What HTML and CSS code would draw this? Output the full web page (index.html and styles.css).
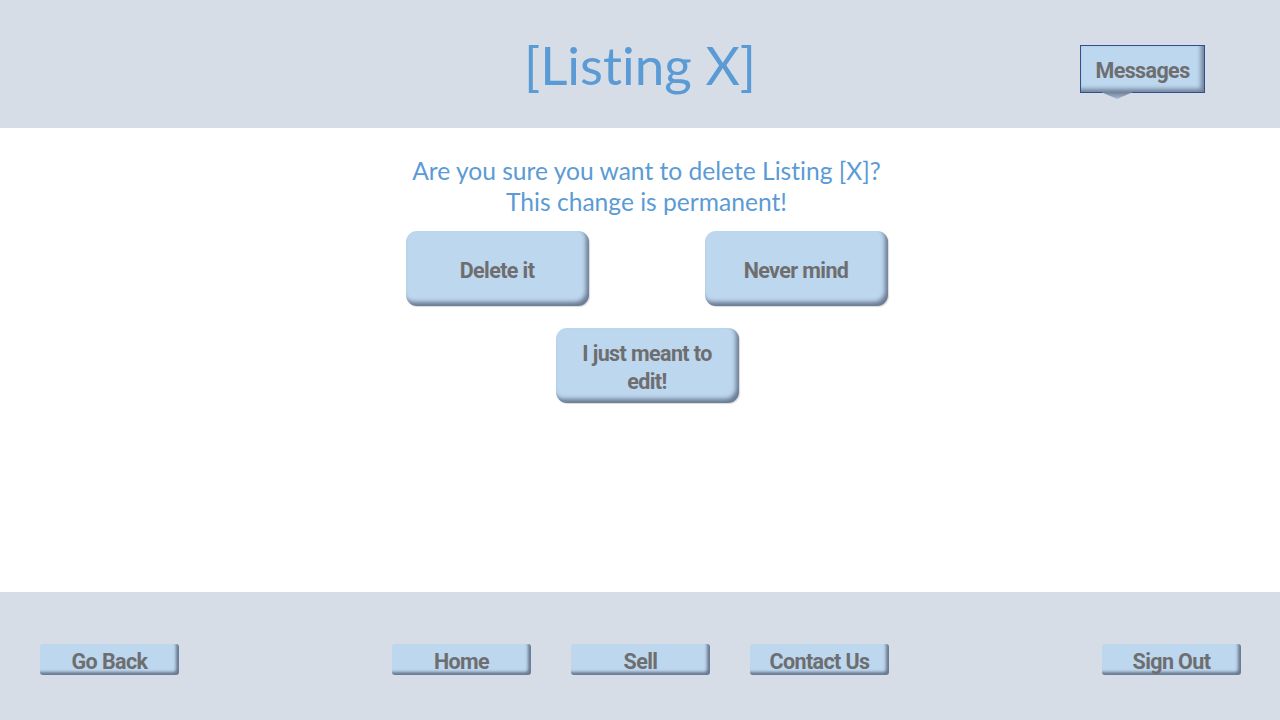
FILE: index.html
```html
<!DOCTYPE html>
<html>
<head>
<meta charset="utf-8">
<link rel="stylesheet" href="styles.css">
</head>
<body>
<header class="top">
  <h1 class="title">[Listing X]</h1>
  <button class="messages">Messages</button>
</header>
<main class="main">
  <p class="question">Are you sure you want to delete Listing [X]?<br>This change is permanent!</p>
  <div class="row">
    <button class="big">Delete it</button>
    <button class="big">Never mind</button>
  </div>
  <div class="row single">
    <button class="big">I just meant to edit!</button>
  </div>
</main>
<footer class="bottom">
  <button class="nav">Go Back</button>
  <div class="navgroup">
    <button class="nav">Home</button>
    <button class="nav">Sell</button>
    <button class="nav">Contact Us</button>
  </div>
  <button class="nav">Sign Out</button>
</footer>
</body>
</html>
```

FILE: styles.css
```css
* { box-sizing: border-box; }
html, body { margin: 0; padding: 0; }
body {
  width: 1280px;
  height: 720px;
  overflow: hidden;
  background: #ffffff;
  font-family: "Lato", "Open Sans", sans-serif;
  font-variant-ligatures: none;
  display: flex;
  flex-direction: column;
}
button {
  font-family: "Roboto", "DejaVu Sans Condensed", sans-serif;
  font-weight: bold;
  letter-spacing: -0.6px;
  color: #6e6e70;
  background: #bdd7ee;
  border: none;
  padding: 0;
  cursor: pointer;
}
.top {
  height: 128px;
  background: #d6dde6;
  position: relative;
  display: flex;
  justify-content: center;
  align-items: flex-start;
}
.title {
  margin: 32px 0 0 0;
  font-weight: normal;
  font-size: 53px;
  line-height: 66px;
  color: #5b9bd5;
}
.messages {
  position: absolute;
  left: 1080px;
  top: 45px;
  width: 125px;
  height: 48px;
  font-size: 21.5px;
  border: 1px solid #2f4f8f;
  box-shadow: inset -3px -3px 4px rgba(50, 60, 85, 0.55);
  padding-top: 2px;
}
.messages::after {
  content: "";
  position: absolute;
  left: 20px;
  bottom: -7px;
  width: 32px;
  height: 7px;
  background: linear-gradient(#6f7f99, #a9bdd3);
  clip-path: polygon(0 0, 100% 0, 50% 100%);
}
.main {
  flex: 1;
  display: flex;
  flex-direction: column;
  align-items: center;
}
.question {
  margin: 27px 0 0 13px;
  text-align: center;
  font-size: 24.6px;
  line-height: 31px;
  color: #5b9bd5;
}
.row {
  display: flex;
  gap: 116px;
  margin-top: 14px;
  margin-left: 13px;
}
.row.single { margin-top: 22px; margin-left: 14px; }
.big {
  width: 183px;
  height: 75px;
  border-radius: 11px;
  font-size: 21.5px;
  line-height: 28px;
  padding: 4px 20px 0;
  box-shadow: inset -3px -4px 4px rgba(50, 60, 85, 0.6), 1px 1px 1px rgba(0,0,0,0.15);
}
.bottom {
  height: 128px;
  background: #d6dde6;
  display: flex;
  justify-content: space-between;
  align-items: flex-start;
  padding: 52px 39px 0 40px;
}
.navgroup {
  display: flex;
  gap: 40px;
}
.nav {
  width: 139px;
  height: 31px;
  border-radius: 3px;
  font-size: 21.5px;
  line-height: 31px;
  padding-top: 2px;
  box-shadow: inset -3px -3px 3px rgba(50, 60, 85, 0.6);
}
```
